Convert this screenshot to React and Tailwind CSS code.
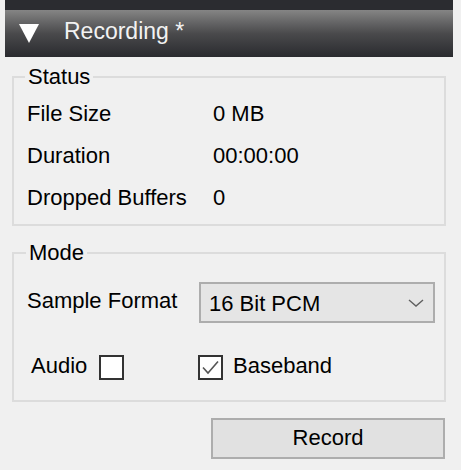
import React from 'react';

const font = { fontFamily: '"Liberation Sans", Arial, sans-serif' };

const StatusRow = ({ label, value }) => (
  <div className="flex h-[42px] items-center pl-[2px] text-[22px] leading-[42px] text-black">
    <span className="w-[186px]">{label}</span>
    <span>{value}</span>
  </div>
);

const CheckBox = ({ checked }) => (
  <span className="flex h-[25px] w-[25px] items-center justify-center border-2 border-[#333333] bg-white">
    {checked ? (
      <svg width="19" height="15" viewBox="0 0 19 15">
        <polyline points="2,7.5 7,13 17,1.5" fill="none" stroke="#555555" strokeWidth="1.6" />
      </svg>
    ) : null}
  </span>
);

export default function App() {
  return (
    <div className="h-[470px] w-[461px] overflow-hidden bg-[#f0f0f0]" style={font}>
      <div className="ml-[5px] h-[10px] w-[448px] bg-[#2b2c30]" />
      <div className="ml-[5px] flex h-[47px] w-[448px] items-center bg-gradient-to-b from-[#858585] via-[#4a4a4c] to-[#2a2b2f]">
        <svg className="ml-[14px]" width="20" height="19" viewBox="0 0 20 19">
          <polygon points="0,0 20,0 10,19" fill="#ffffff" />
        </svg>
        <span className="ml-[25px] -mt-[4px] text-[23px] text-[#f2f2f2]">Recording *</span>
      </div>

      <fieldset className="ml-[12px] mt-[10px] w-[434px] border-2 border-[#dcdcdc] pb-[5px] pl-[11px]">
        <legend className="px-[3px] text-[22px] leading-[20px] text-black">Status</legend>
        <div className="mt-[6px]">
          <StatusRow label="File Size" value="0 MB" />
          <StatusRow label="Duration" value="00:00:00" />
          <StatusRow label="Dropped Buffers" value="0" />
        </div>
      </fieldset>

      <fieldset className="ml-[12px] mt-[17px] w-[434px] border-2 border-[#dcdcdc] pb-[18px] pl-[11px]">
        <legend className="ml-[1px] px-[3px] text-[22px] leading-[20px] text-black">Mode</legend>
        <div className="mt-[19px] flex items-center pl-[2px] text-[22px] text-black">
          <span className="-mt-[5px] w-[172px]">Sample Format</span>
          <div className="flex h-[41px] w-[236px] items-center justify-between border-2 border-[#adadad] bg-[#e5e5e5] pl-[8px] pr-[9px]">
            <span className="mt-[1px]">16 Bit PCM</span>
            <svg width="16" height="8" viewBox="0 0 16 8">
              <polyline points="1,1 8,7 15,1" fill="none" stroke="#606060" strokeWidth="1.4" />
            </svg>
          </div>
        </div>
        <div className="mt-[29px] flex items-center text-[22px] text-black">
          <span className="ml-[6px] -mt-[3px] w-[68px]">Audio</span>
          <CheckBox checked={false} />
          <span className="ml-[74px]">
            <CheckBox checked />
          </span>
          <span className="ml-[10px] -mt-[3px]">Baseband</span>
        </div>
      </fieldset>

      <button className="ml-[211px] mt-[16px] flex h-[41px] w-[234px] items-center justify-center border-2 border-[#adadad] bg-[#e1e1e1] text-[22px] text-black">
        <span className="-mt-[2px]">Record</span>
      </button>
    </div>
  );
}
